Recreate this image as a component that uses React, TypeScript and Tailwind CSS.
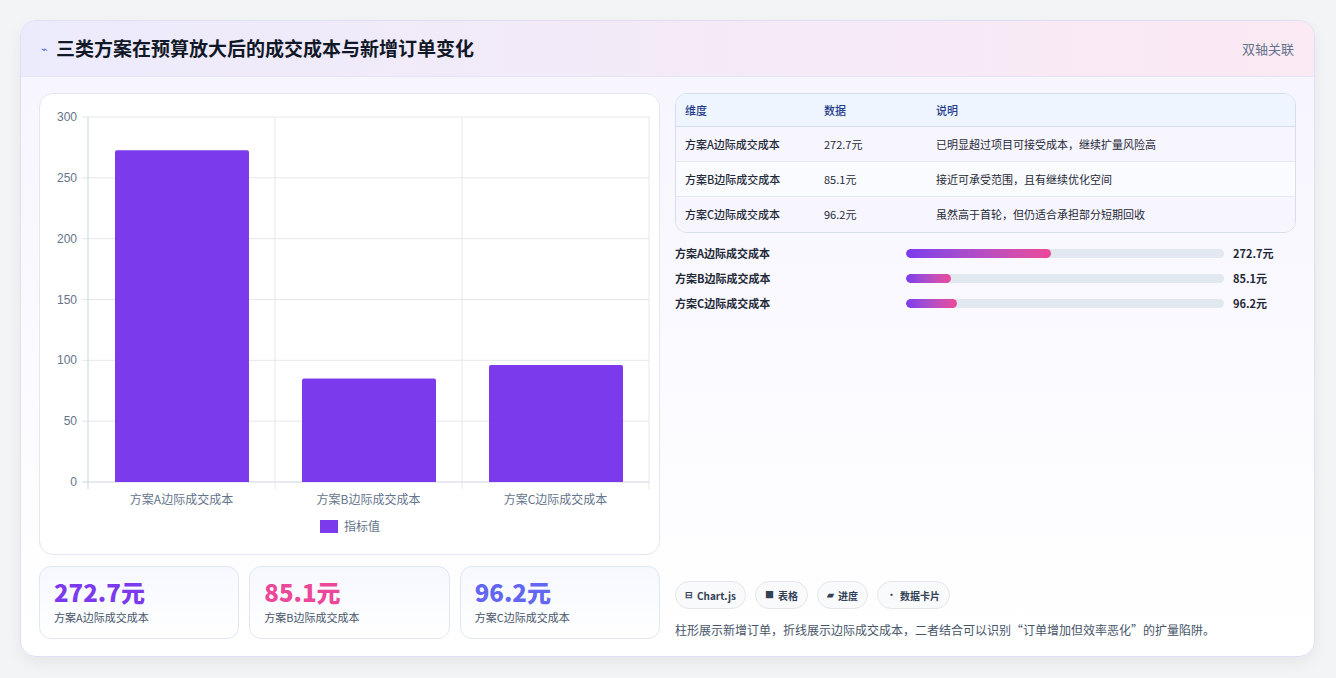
import React from "react";

const F = { fontFamily: '"Noto Sans CJK SC","Noto Sans",sans-serif' };
const rows = [
  { n: "方案A边际成交成本", v: 272.7, d: "已明显超过项目可接受成本，继续扩量风险高", c: "text-[#7c3aed]" },
  { n: "方案B边际成交成本", v: 85.1, d: "接近可承受范围，且有继续优化空间", c: "text-[#ec4899]" },
  { n: "方案C边际成交成本", v: 96.2, d: "虽然高于首轮，但仍适合承担部分短期回收", c: "text-[#6366f1]" },
];

function Chart() {
  const L = 48, R = 609, T = 23, B = 388; // relative to card (x 39, y 92)
  const h = B - T;
  const ticks = [0, 50, 100, 150, 200, 250, 300];
  const colW = (R - L) / 3;
  return (
    <svg width="619" height="460" className="block">
      {ticks.map((t) => {
        const y = B - (t / 300) * h;
        return (
          <g key={t}>
            <line x1={L - 6} x2={R} y1={y} y2={y} stroke={t === 0 ? "#cbd5e1" : "#e5e7eb"} />
            <text x={L - 11} y={y + 4} textAnchor="end" fontSize="12" fill="#64748b" fontFamily="Liberation Sans, sans-serif">{t}</text>
          </g>
        );
      })}
      {[0, 1, 2, 3].map((i) => (
        <line key={i} x1={L + i * colW} x2={L + i * colW} y1={T} y2={B + 7} stroke={i === 0 ? "#cbd5e1" : "#e5e7eb"} />
      ))}
      {rows.map((r, i) => {
        const bh = (r.v / 300) * h;
        const x = L + i * colW + 27;
        return (
          <g key={i}>
            <path d={`M${x} ${B} V${B - bh + 2} a2 2 0 0 1 2 -2 H${x + 132} a2 2 0 0 1 2 2 V${B} Z`} fill="#7c3aed" />
            <text x={L + i * colW + colW / 2} y={B + 22} textAnchor="middle" fontSize="12" fill="#64748b" style={F}>{r.n}</text>
          </g>
        );
      })}
      <rect x="280" y="426" width="18" height="13" fill="#7c3aed" />
      <text x="304" y="437" fontSize="12" fill="#64748b" style={F}>指标值</text>
    </svg>
  );
}

export default function App() {
  return (
    <div className="w-[1336px] h-[678px] bg-[#f3f4f6] pt-[20px] pl-[20px]" style={F}>
      <div className="w-[1295px] h-[637px] rounded-[16px] bg-gradient-to-b from-[#f6f4fe] to-white border border-[#e0e0f5] shadow-[0_6px_16px_rgba(0,0,0,0.06)] overflow-hidden flex flex-col">
        <div className="h-[56px] shrink-0 flex items-center justify-between px-[20px] bg-gradient-to-r from-[#ecebfc] to-[#fbe9f3] border-b border-[#e6e3f5]">
          <div className="flex items-center gap-[8px]">
            <span className="text-[#4f6bd8] text-[11px]">⌁</span>
            <span className="text-[19px] font-bold text-[#111827]">三类方案在预算放大后的成交成本与新增订单变化</span>
          </div>
          <span className="text-[13px] text-[#64748b]">双轴关联</span>
        </div>
        <div className="flex gap-[15px] px-[18px] pt-[16px]">
          <div className="w-[621px] flex flex-col gap-[11px]">
            <div className="h-[462px] rounded-[14px] bg-white border border-[#e2e8f0]">
              <Chart />
            </div>
            <div className="flex gap-[10px]">
              {rows.map((r, i) => (
                <div key={i} className="flex-1 h-[73px] rounded-[12px] border border-[#dfe7f3] bg-gradient-to-b from-[#f6f8ff] to-white px-[14px] pt-[9px]">
                  <div className={`text-[24px] font-extrabold leading-[32px] ${r.c}`}>{r.v}元</div>
                  <div className="text-[11px] text-[#475569] mt-[1px]">{r.n}</div>
                </div>
              ))}
            </div>
          </div>
          <div className="w-[621px] flex flex-col">
            <div className="rounded-[12px] border border-[#d6deea] overflow-hidden bg-white text-[11px]">
              <div className="flex h-[33px] items-center bg-[#eff5ff] border-b border-[#d6deea] text-[#1e3a8a] font-medium">
                <span className="w-[148px] pl-[9px]">维度</span>
                <span className="w-[112px]">数据</span>
                <span>说明</span>
              </div>
              {rows.map((r, i) => (
                <div key={i} className={`flex h-[35px] items-center text-[#1f2937] ${i % 2 ? "bg-[#fafbfe]" : "bg-[#f7f5fe]"} ${i < 2 ? "border-b border-[#e5e9f2]" : ""}`}>
                  <span className="w-[148px] pl-[9px] font-medium">{r.n}</span>
                  <span className="w-[112px]">{r.v}元</span>
                  <span>{r.d}</span>
                </div>
              ))}
            </div>
            <div className="flex flex-col gap-[9px] mt-[12px]">
              {rows.map((r, i) => (
                <div key={i} className="flex items-center h-[16px] text-[11px] font-bold text-[#1f2937]">
                  <span className="w-[231px]">{r.n}</span>
                  <div className="w-[318px] h-[9px] rounded-full bg-[#e2e8f0] overflow-hidden">
                    <div className="h-full rounded-full bg-gradient-to-r from-[#7c3aed] to-[#ec4899]" style={{ width: `${(r.v / 600) * 100}%` }} />
                  </div>
                  <span className="ml-[9px]">{r.v}元</span>
                </div>
              ))}
            </div>
            <div className="flex-1 h-[270px]" />
            <div className="flex gap-[9px]">
              {[["⊟", "Chart.js"], ["■", "表格"], ["▰", "进度"], ["•", "数据卡片"]].map(([ic, t]) => (
                <span key={t} className="h-[28px] px-[9px] rounded-full border border-[#e5e7eb] bg-[#f8fafc] flex items-center gap-[4px] text-[10px] font-bold text-[#334155]">
                  <span className="text-[9px]">{ic}</span>{t}
                </span>
              ))}
            </div>
            <div className="mt-[12px] text-[12px] text-[#475569]">柱形展示新增订单，折线展示边际成交成本，二者结合可以识别“订单增加但效率恶化”的扩量陷阱。</div>
          </div>
        </div>
      </div>
    </div>
  );
}
